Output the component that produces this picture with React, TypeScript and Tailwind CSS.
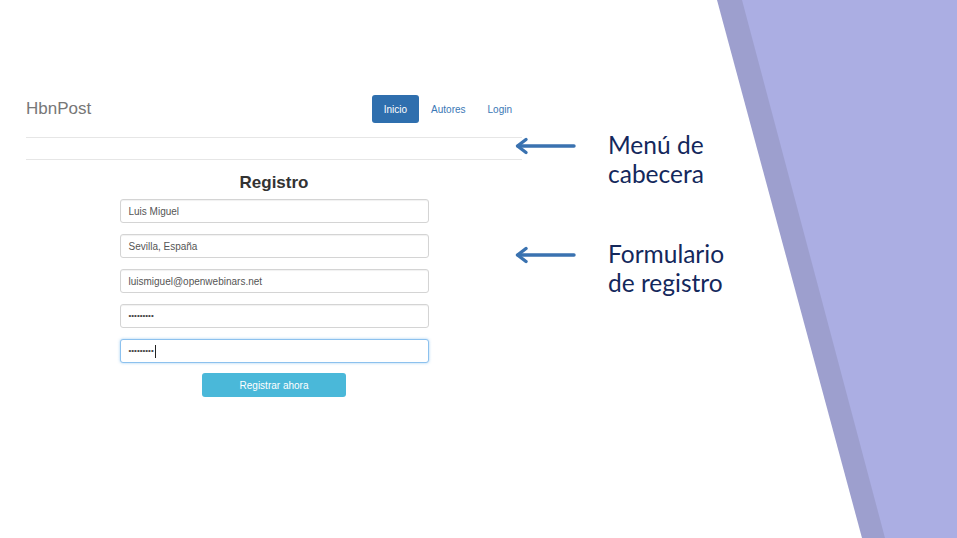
import React from 'react';

function Arrow() {
  return (
    <svg width="62" height="20" viewBox="0 0 62 20" className="shrink-0">
      <g stroke="#3a72b0" strokeWidth="3.4" strokeLinecap="round" strokeLinejoin="round" fill="none">
        <path d="M4 10 H60" />
        <path d="M12 3.5 L3.5 10 L12 16.5" />
      </g>
    </svg>
  );
}

function Field({ value, focused = false, password = false }: { value: string; focused?: boolean; password?: boolean }) {
  return (
    <div
      className={
        focused
          ? 'h-[24px] w-[309px] rounded-[3px] border border-[#8cc1ee] bg-white pl-[8px] flex items-center text-[10px] text-[#555] shadow-[0_0_3px_rgba(102,175,233,0.6)]'
          : 'h-[24px] w-[309px] rounded-[3px] border border-[#d4d4d4] bg-white pl-[8px] flex items-center text-[10px] text-[#555] shadow-[inset_0_1px_1px_rgba(0,0,0,0.06)]'
      }
    >
      {password ? <span className="text-[8px] text-[#444]">•••••••••</span> : value}
      {focused && <span className="ml-[1px] h-[13px] w-px bg-[#222]" />}
    </div>
  );
}

export default function App() {
  return (
    <div className="relative w-[957px] h-[538px] overflow-hidden bg-white">
      {/* decorative slanted band */}
      <svg className="absolute inset-0" width="957" height="538" viewBox="0 0 957 538">
        <polygon points="717,0 957,0 957,538 862,538" fill="#9d9fce" />
        <polygon points="742,0 957,0 957,538 885,538" fill="#abaee3" />
      </svg>

      <div className="relative flex">
        {/* screenshot of the app */}
        <div className="ml-[26px] w-[496px] pt-[95px] font-['Liberation_Sans',Arial,sans-serif]">
          <div className="flex items-center justify-between h-[28px]">
            <span className="text-[17px] text-[#777]">HbnPost</span>
            <nav className="flex items-center text-[10px]">
              <span className="h-[28px] px-[12px] flex items-center rounded-[3px] bg-[#2f6fae] text-white">Inicio</span>
              <span className="h-[28px] px-[12px] flex items-center text-[#3a78b5]">Autores</span>
              <span className="h-[28px] px-[10px] flex items-center text-[#3a78b5]">Login</span>
            </nav>
          </div>
          <div className="mt-[14px] border-t border-[#e6e6e6]" />
          <div className="mt-[21px] border-t border-[#e6e6e6]" />
          <h1 className="mt-[13px] text-center text-[17px] leading-[20px] font-bold text-[#333]">Registro</h1>
          <div className="mt-[6px] flex flex-col items-center gap-[11px]">
            <Field value="Luis Miguel" />
            <Field value="Sevilla, España" />
            <Field value="luismiguel@openwebinars.net" />
            <Field value="" password />
            <Field value="" password focused />
          </div>
          <div className="mt-[10px] flex justify-center">
            <span className="h-[24px] w-[144px] rounded-[3px] bg-[#4ab8d9] flex items-center justify-center text-[10px] text-white">
              Registrar ahora
            </span>
          </div>
        </div>

        {/* annotations */}
        <div className="-ml-[8px] pt-[130px] flex flex-col gap-[51px] font-['Lato','Open_Sans',sans-serif] text-[24.5px] leading-[29px] text-[#14285c]">
          <div className="flex items-start">
            <div className="h-[29px] flex items-center pt-[2px]"><Arrow /></div>
            <div className="ml-[32px]">
              <div>Menú de</div>
              <div>cabecera</div>
            </div>
          </div>
          <div className="flex items-start">
            <div className="h-[29px] flex items-center pt-[2px]"><Arrow /></div>
            <div className="ml-[32px]">
              <div>Formulario</div>
              <div>de registro</div>
            </div>
          </div>
        </div>
      </div>
    </div>
  );
}
